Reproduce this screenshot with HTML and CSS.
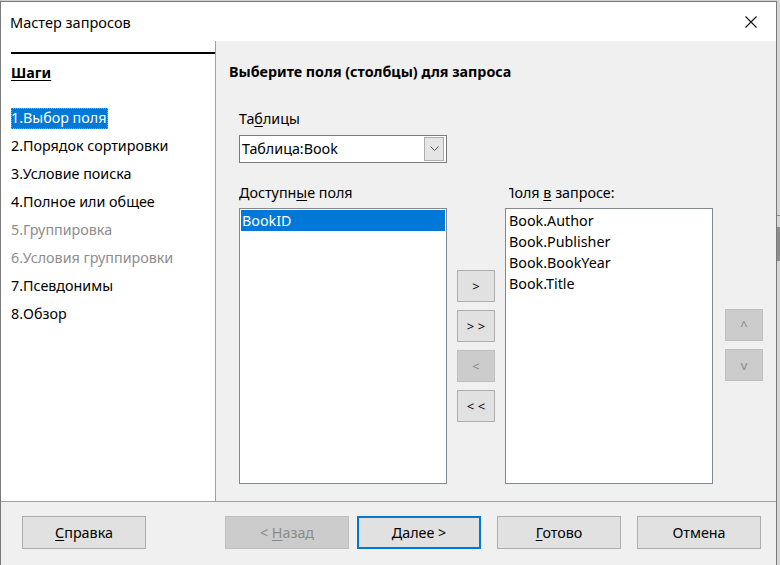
FILE: index.html
```html
<!DOCTYPE html>
<html lang="ru">
<head>
<meta charset="utf-8">
<title>Мастер запросов</title>
<link rel="stylesheet" href="styles.css">
</head>
<body>
<div class="backdrop">
  <div class="window">
    <div class="titlebar">
      <span class="title">Мастер запросов</span>
      <svg class="close" width="12" height="12" viewBox="0 0 12 12"><path d="M0.5 0.5 L11.5 11.5 M11.5 0.5 L0.5 11.5" stroke="#111" stroke-width="1.1" fill="none"/></svg>
    </div>
    <div class="main">
      <div class="steps">
        <div class="rule"></div>
        <div class="steps-head">Шаги</div>
        <ul class="step-list">
          <li class="step current">1.Выбор поля</li>
          <li class="step">2.Порядок сортировки</li>
          <li class="step">3.Условие поиска</li>
          <li class="step">4.Полное или общее</li>
          <li class="step off">5.Группировка</li>
          <li class="step off">6.Условия группировки</li>
          <li class="step">7.Псевдонимы</li>
          <li class="step">8.Обзор</li>
        </ul>
      </div>
      <div class="page">
        <div class="page-title">Выберите поля (столбцы) для запроса</div>
        <div class="form">
          <div class="label">Та<u>б</u>лицы</div>
          <div class="combo">
            <span class="combo-text">Таблица:Book</span>
            <span class="combo-btn"><svg width="9" height="6" viewBox="0 0 9 6"><path d="M0.5 0.5 L4.5 4.5 L8.5 0.5" stroke="#555" stroke-width="1" fill="none"/></svg></span>
          </div>
          <div class="fields">
            <div class="label avail-label">Доступн<u>ы</u>е поля</div>
            <div class="label query-label"><span>Поля <u>в</u> запросе:</span></div>
            <div class="listbox avail">
              <div class="item selected">BookID</div>
            </div>
            <div class="movers">
              <button class="btn small">&gt;</button>
              <button class="btn small">&gt; &gt;</button>
              <button class="btn small disabled">&lt;</button>
              <button class="btn small">&lt; &lt;</button>
            </div>
            <div class="listbox chosen">
              <div class="item">Book.Author</div>
              <div class="item">Book.Publisher</div>
              <div class="item">Book.BookYear</div>
              <div class="item">Book.Title</div>
            </div>
            <div class="order">
              <button class="btn small disabled">^</button>
              <button class="btn small disabled">v</button>
            </div>
          </div>
        </div>
      </div>
    </div>
    <div class="footer">
      <button class="btn wide"><u>С</u>правка</button>
      <button class="btn wide disabled back">&lt; <u>Н</u>азад</button>
      <button class="btn wide default"><u>Д</u>алее &gt;</button>
      <button class="btn wide spaced"><u>Г</u>отово</button>
      <button class="btn wide spaced">Отмена</button>
    </div>
  </div>
  <div class="behind">
    <div class="behind-line"></div>
    <div class="behind-block"></div>
  </div>
</div>
</body>
</html>
```
FILE: styles.css
```css
* { box-sizing: border-box; }
html, body { margin: 0; padding: 0; }
body {
  width: 780px;
  height: 565px;
  overflow: hidden;
  background: #cfcfcf;
  font-family: "Noto Sans", "Open Sans", sans-serif;
  font-size: 14.3px;
  color: #000;
}
u { text-decoration: underline; text-underline-offset: 2px; text-decoration-thickness: 1px; }

.backdrop { display: flex; height: 565px; }

.window {
  width: 777px;
  height: 566px;
  margin-top: 1px;
  border: 1px solid #7a7a7a;
  border-bottom: none;
  background: #f0f0f0;
  display: flex;
  flex-direction: column;
  flex: none;
}

.behind {
  flex: 1;
  background: #d6d6d6;
  display: flex;
  flex-direction: column;
  padding-top: 215px;
}
.behind-line { height: 1px; background: #8a8a8a; }
.behind-block { height: 34px; margin-top: 11px; background: #8c8c8c; }

.titlebar {
  height: 39px;
  background: #fff;
  display: flex;
  align-items: center;
  justify-content: space-between;
  padding: 0 19px 0 9px;
}
.title { font-size: 14.5px; line-height: 20px; padding-top: 1px; }
.close { display: block; }

.main {
  height: 460px;
  display: flex;
}

.steps {
  width: 215px;
  background: #fff;
  border-right: 1px solid #a0a0a0;
  padding-top: 11px;
  padding-left: 10px;
  flex: none;
}
.rule { height: 2px; background: #000; margin-bottom: 9px; }
.steps-head {
  font-weight: bold;
  text-decoration: underline;
  text-underline-offset: 2px;
  line-height: 20px;
}
.step-list { list-style: none; margin: 25px 0 0 0; padding: 0; }
.step {
  height: 28px;
  line-height: 20px;
  white-space: nowrap;
}
.step.current {
  display: inline-block;
  height: 21px;
  margin-bottom: 7px;
  background: #0078d7;
  color: #fff;
  outline: 1px dotted #d79a4a;
  outline-offset: -1px;
  padding-right: 2px;
}
.step.off { color: #8d8d8d; }

.page {
  flex: 1;
  padding: 21px 0 0 13px;
}
.page-title { font-weight: bold; line-height: 20px; }
.form { padding: 27px 0 0 10px; }
.label { line-height: 20px; white-space: nowrap; }
.combo {
  margin-top: 6px;
  width: 208px;
  height: 28px;
  border: 1px solid #7a7a7a;
  background: #fff;
  display: flex;
  align-items: center;
  justify-content: space-between;
  padding: 0 2px 0 2px;
}
.combo-text { line-height: 20px; }
.combo-btn {
  width: 20px;
  height: 24px;
  background: #e5e5e5;
  border: 1px solid #adadad;
  display: flex;
  align-items: center;
  justify-content: center;
}
.combo-btn svg { display: block; }

.fields {
  margin-top: 20px;
  display: grid;
  grid-template-columns: 208px 38px 208px 38px;
  grid-template-rows: 20px 276px;
  column-gap: 10px;
  row-gap: 5px;
}
.avail-label { grid-column: 1; grid-row: 1; }
.query-label { grid-column: 3; grid-row: 1; overflow: hidden; margin-left: 4px; }
.query-label span { display: inline-block; margin-left: -5px; }
.listbox {
  grid-row: 2;
  border: 1px solid #828790;
  background: #fff;
  padding: 1px;
}
.avail { grid-column: 1; }
.chosen { grid-column: 3; padding-left: 3px; }
.item { height: 21px; line-height: 21px; white-space: nowrap; }
.item.selected { background: #0078d7; color: #fff; padding-left: 1px; }

.movers, .order {
  grid-row: 2;
  display: flex;
  flex-direction: column;
  justify-content: center;
  gap: 8px;
}
.movers { grid-column: 2; }
.order { grid-column: 4; padding-bottom: 2px; margin-left: 2px; }

.btn {
  font-family: inherit;
  font-size: 14.3px;
  color: #000;
  background: #e1e1e1;
  border: 1px solid #adadad;
  padding: 0;
  margin: 0;
  line-height: 20px;
}
.btn.small { width: 38px; height: 32px; font-size: 13px; }
.btn.disabled { background: #cccccc; border-color: #bfbfbf; color: #8a8a8a; }

.footer {
  height: 66px;
  border-top: 1px solid #a0a0a0;
  display: flex;
  align-items: flex-start;
  padding: 14px 0 0 21px;
}
.btn.wide { width: 124px; height: 33px; }
.btn.back { margin-left: 79px; }
.btn.default { margin-left: 8px; border: 2px solid #0078d7; }
.btn.spaced { margin-left: 16px; }
```
